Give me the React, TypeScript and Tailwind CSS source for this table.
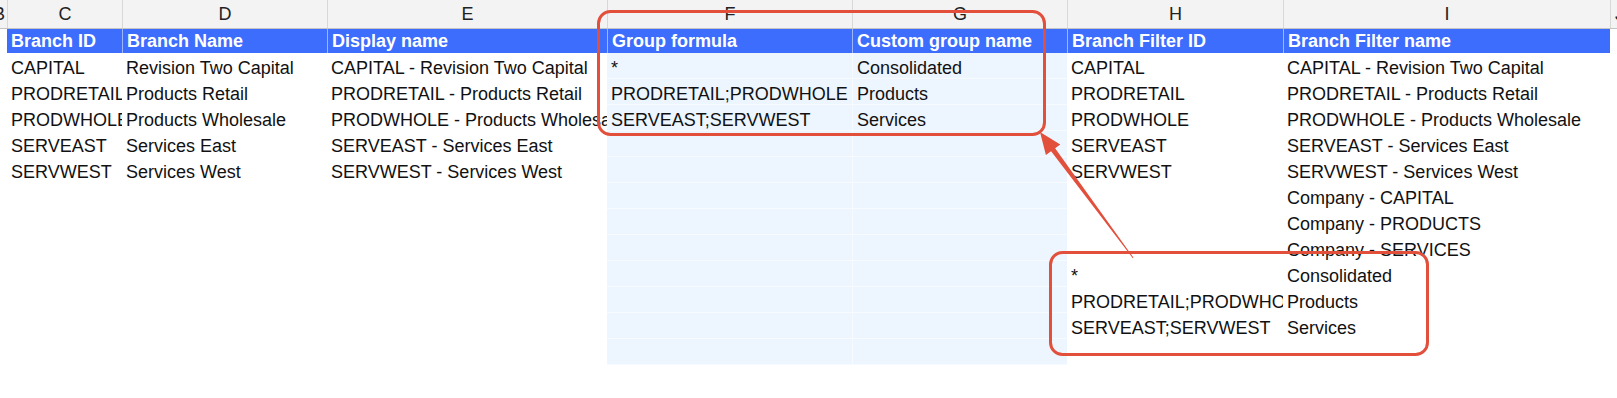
import clsx from 'clsx';

type Row = [string, string, string, string, string, string, string];

const headers: Row = [
  'Branch ID',
  'Branch Name',
  'Display name',
  'Group formula',
  'Custom group name',
  'Branch Filter ID',
  'Branch Filter name',
];

const rows: Row[] = [
  ['CAPITAL', 'Revision Two Capital', 'CAPITAL - Revision Two Capital', '*', 'Consolidated', 'CAPITAL', 'CAPITAL - Revision Two Capital'],
  ['PRODRETAIL', 'Products Retail', 'PRODRETAIL - Products Retail', 'PRODRETAIL;PRODWHOLE', 'Products', 'PRODRETAIL', 'PRODRETAIL - Products Retail'],
  ['PRODWHOLE', 'Products Wholesale', 'PRODWHOLE - Products Wholesale', 'SERVEAST;SERVWEST', 'Services', 'PRODWHOLE', 'PRODWHOLE - Products Wholesale'],
  ['SERVEAST', 'Services East', 'SERVEAST - Services East', '', '', 'SERVEAST', 'SERVEAST - Services East'],
  ['SERVWEST', 'Services West', 'SERVWEST - Services West', '', '', 'SERVWEST', 'SERVWEST - Services West'],
  ['', '', '', '', '', '', 'Company - CAPITAL'],
  ['', '', '', '', '', '', 'Company - PRODUCTS'],
  ['', '', '', '', '', '', 'Company - SERVICES'],
  ['', '', '', '', '', '*', 'Consolidated'],
  ['', '', '', '', '', 'PRODRETAIL;PRODWHOLE', 'Products'],
  ['', '', '', '', '', 'SERVEAST;SERVWEST', 'Services'],
  ['', '', '', '', '', '', ''],
];

const letters = ['C', 'D', 'E', 'F', 'G', 'H', 'I'];

const grid = 'grid grid-cols-[7px_115px_205px_280px_245px_215px_216px_327px_7px]';

function Annotations() {
  return (
    <svg className="pointer-events-none absolute inset-0" width={1617} height={398} viewBox="0 0 1617 398">
      <rect x={598.5} y={11.5} width={446} height={123} rx={12} fill="none" stroke="#e2503c" strokeWidth={3} />
      <rect x={1050.5} y={252.5} width={377} height={102} rx={12} fill="none" stroke="#e2503c" strokeWidth={3} />
      <polygon
        fill="#e2503c"
        points="1040,132 1060.3,144.4 1055.1,148.2 1133.4,257.6 1132.8,258.2 1051.1,151.2 1045.9,155 "
      />
    </svg>
  );
}

export default function App() {
  return (
    <div className="relative h-[398px] w-[1617px] overflow-hidden bg-white font-['Liberation_Sans',Arial,sans-serif] text-[18px] text-[#111]">
      {/* column letters */}
      <div className={clsx(grid, 'h-[29px] border-b border-[#c4c4c4] bg-[#f3f3f3] text-[#222]')}>
        <div className="flex justify-end overflow-hidden pr-[2px] leading-[28px]">
          <span className="shrink-0">B</span>
        </div>
        {letters.map((l) => (
          <div key={l} className="border-l border-[#d8d8d8] text-center leading-[28px]">
            {l}
          </div>
        ))}
        <div className="overflow-hidden whitespace-nowrap border-l border-[#d8d8d8] leading-[28px]">
          <span className="ml-[4px] inline-block shrink-0">J</span>
        </div>
      </div>

      {/* header row */}
      <div className={clsx(grid, 'h-[24px]')}>
        <div />
        {headers.map((h, i) => (
          <div
            key={h}
            className={clsx(
              'overflow-hidden whitespace-nowrap bg-[#3d6dfd] pl-[4px] font-bold leading-[24px] text-white',
              i > 0 && 'border-l border-[#9db6ff]',
            )}
          >
            {h}
          </div>
        ))}
        <div />
      </div>

      {/* data rows */}
      {rows.map((r, ri) => (
        <div key={ri} className={clsx(grid, 'h-[26px]')}>
          <div />
          {r.map((v, ci) => (
            <div
              key={ci}
              className={clsx(
                'overflow-hidden whitespace-nowrap pl-[4px] pt-[4px] leading-[22px]',
                (ci === 3 || ci === 4) && 'border-b border-[#f7faff] bg-[#edf5ff]',
                ci === 4 && 'border-l border-[#f4f8ff]',
              )}
            >
              {v}
            </div>
          ))}
          <div />
        </div>
      ))}

      <Annotations />
    </div>
  );
}
